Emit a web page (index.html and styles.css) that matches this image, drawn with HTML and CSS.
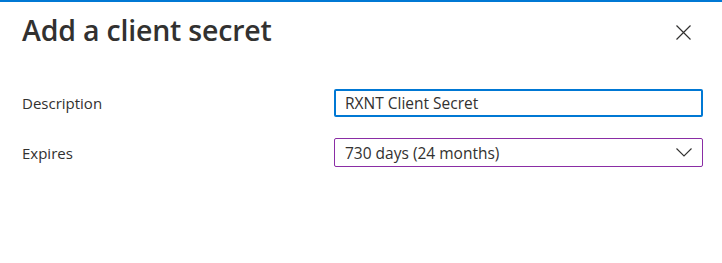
FILE: index.html
```html
<!DOCTYPE html>
<html>
<head>
<meta charset="utf-8">
<link rel="stylesheet" href="styles.css">
</head>
<body>
<div class="panel">
  <div class="header">
    <h1 class="title">Add a client secret</h1>
    <button class="close" aria-label="Close">
      <svg width="15" height="15" viewBox="0 0 15 15"><path d="M0.5 0.5 L14.5 14.5 M14.5 0.5 L0.5 14.5" stroke="#323130" stroke-width="1.2" fill="none"/></svg>
    </button>
  </div>
  <div class="form">
    <div class="row">
      <label class="label">Description</label>
      <div class="input focused">RXNT Client Secret</div>
    </div>
    <div class="row">
      <label class="label">Expires</label>
      <div class="input select">
        <span>730 days (24 months)</span>
        <svg width="16" height="9" viewBox="0 0 16 9"><path d="M0.5 0.5 L8 8 L15.5 0.5" stroke="#323130" stroke-width="1.1" fill="none"/></svg>
      </div>
    </div>
  </div>
</div>
</body>
</html>
```
FILE: styles.css
```css
html, body { margin: 0; padding: 0; background: #fff; }
body { font-family: "Open Sans", "Noto Sans", sans-serif; color: #323130; }
.panel { border-top: 2px solid #0078d4; width: 722px; height: 261px; }
.header { display: flex; align-items: flex-start; justify-content: space-between; padding: 9px 31px 0 22px; }
.title { margin: 0; font-size: 28.5px; line-height: 38px; font-weight: 600; color: #323130; letter-spacing: -0.2px; }
.close { background: none; border: 0; padding: 0; margin-top: 14px; width: 15px; height: 15px; display: flex; }
.form { padding: 40px 19px 0 22px; display: flex; flex-direction: column; gap: 21px; }
.row { display: flex; align-items: center; }
.label { width: 312px; font-size: 15px; color: #323130; }
.input { width: 369px; height: 29px; box-sizing: border-box; border: 1px solid #8a8886; border-radius: 2px; font-size: 15.5px; display: flex; align-items: center; padding: 0 10px; }
.input.focused { border: 2px solid #0078d4; padding-left: 9px; height: 28px; }
.input.select { border-color: #8a2da5; justify-content: space-between; padding-right: 10px; }
```
